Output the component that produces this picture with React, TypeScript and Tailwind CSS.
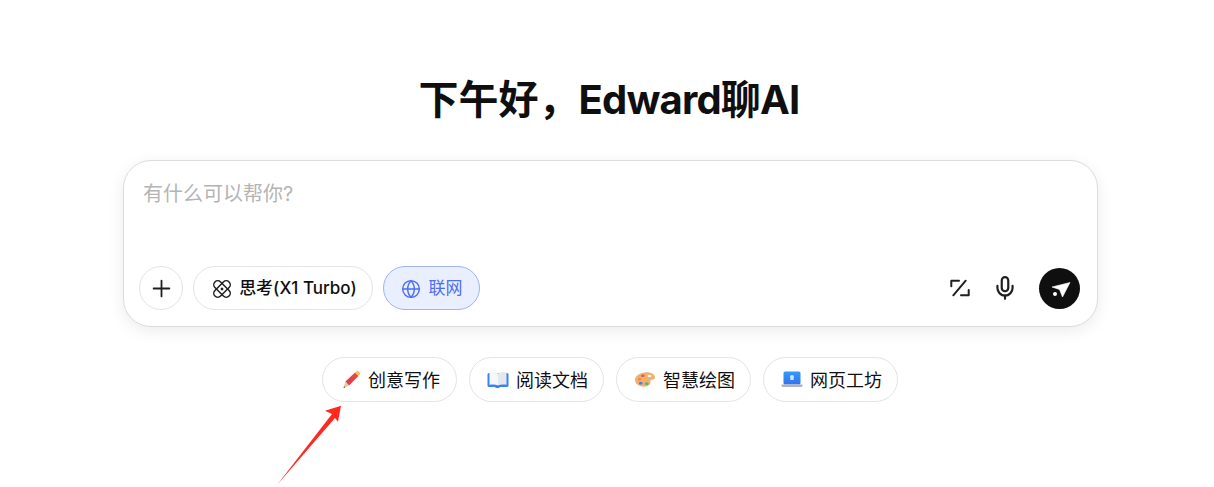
import React from 'react';
import { Mic, Plus, Globe } from 'lucide-react';

const FONT = "font-['Inter','Noto_Sans_CJK_SC',sans-serif]";

const ThinkIcon = () => (
  <svg width="20" height="20" viewBox="0 0 20 20" fill="none" stroke="#1f1f1f" strokeWidth="1.5">
    <rect x="0" y="6" width="20" height="8" rx="4" transform="rotate(45 10 10)" />
    <rect x="0" y="6" width="20" height="8" rx="4" transform="rotate(-45 10 10)" />
    <path d="M10 8.300 11.700 10 10 11.700 8.300 10Z" fill="#1f1f1f" stroke="none" />
  </svg>
);

const FormulaIcon = () => (
  <svg width="22" height="20" viewBox="0 0 22 20" fill="none" stroke="#1f1f1f" strokeWidth="2" strokeLinecap="round" strokeLinejoin="round">
    <path d="M10 2.700H2.300v5.600" />
    <path d="M19.700 12v5.300H12" />
    <path d="M16.700 2.700 4.300 17.300" />
  </svg>
);

const SendIcon = () => (
  <svg width="22" height="22" viewBox="0 0 22 22" fill="white">
    <path d="M21 5.500 3 10l7.500 2.500 3 7.500Z" strokeLinejoin="round" stroke="white" strokeWidth="0.600" />
    <circle cx="6" cy="17" r="2" />
  </svg>
);

const PencilIcon = () => (
  <svg width="20" height="20" viewBox="0 0 20 20">
    <defs>
      <linearGradient id="pencil-body" x1="0" y1="1" x2="1" y2="0">
        <stop offset="0" stopColor="#e0304f" />
        <stop offset="1" stopColor="#f0503a" />
      </linearGradient>
    </defs>
    <path d="M4.500 11.500 14 2.500l3.500 3.500-9.500 9.500Z" fill="url(#pencil-body)" />
    <path d="M14 2.500l1.500-1.300c.8-.6 1.500-.5 2.200.2l1 1c.7.7.8 1.500.1 2.200L17.500 6Z" fill="#f8c34a" />
    <path d="M4.500 11.500 8 15.500 2.500 18Z" fill="#e9c49c" />
    <path d="M3.200 16.300 4.400 17.400 2.500 18Z" fill="#4b4b4b" />
  </svg>
);

const BookIcon = () => (
  <svg width="22" height="20" viewBox="0 0 22 20">
    <path d="M0.500 4.500a1.500 1.500 0 0 1 1.500-1.500h18a1.500 1.500 0 0 1 1.500 1.500v11a1.500 1.500 0 0 1-1.500 1.500h-7l-1 1h-3l-1-1H2a1.500 1.500 0 0 1-1.500-1.500Z" fill="#3f82ef" />
    <path d="M2.500 2.500c3-.6 6.500-.4 8.500 1v12c-2-1-5.500-1.200-8.500-.8Z" fill="#f6f7f9" />
    <path d="M19.500 2.500c-3-.6-6.500-.4-8.500 1v12c2-1 5.500-1.200 8.500-.8Z" fill="#e4e7ec" />
  </svg>
);

const PaletteIcon = () => (
  <svg width="22" height="20" viewBox="0 0 22 20">
    <path d="M10.500 2.500c5.500-.8 10.500 1.500 10.500 5 0 2.300-3.200 1.900-4.300 2.800-1 .8.500 2.400-.8 4-1.600 2-5.200 3-8.800 2C3.100 15.300 1 12.800 1 10c0-3.800 4.200-6.800 9.500-7.500Z" fill="#eeb06f" />
    <rect x="7" y="4.500" width="3.500" height="2.500" rx="1" fill="#e9584f" />
    <rect x="4" y="8" width="3" height="2.500" rx="1" fill="#f08a3c" />
    <rect x="5" y="12" width="3.500" height="2.500" rx="1" fill="#3f82ef" />
    <rect x="11" y="12.500" width="3.500" height="2.500" rx="1" fill="#35c07a" />
    <ellipse cx="15.500" cy="6" rx="2" ry="1.100" fill="#fff" />
  </svg>
);

const LaptopIcon = () => (
  <svg width="22" height="20" viewBox="0 0 22 20">
    <defs>
      <linearGradient id="laptop-screen" x1="0" y1="0" x2="0" y2="1">
        <stop offset="0" stopColor="#2f9cf5" />
        <stop offset="1" stopColor="#3a6ff0" />
      </linearGradient>
    </defs>
    <rect x="2.500" y="1.500" width="17" height="13" rx="1.500" fill="url(#laptop-screen)" />
    <circle cx="11" cy="7" r="2" fill="#cfe3fb" />
    <rect x="9.500" y="8" width="3" height="2" fill="#cfe3fb" />
    <path d="M0.500 14.500h21v1c0 1-.7 1.500-1.500 1.500H2c-.8 0-1.500-.5-1.500-1.500Z" fill="#a9b4c4" />
  </svg>
);

const suggestions = [
  { icon: <PencilIcon />, label: '创意写作' },
  { icon: <BookIcon />, label: '阅读文档' },
  { icon: <PaletteIcon />, label: '智慧绘图' },
  { icon: <LaptopIcon />, label: '网页工坊' },
];

export default function App() {
  return (
    <div className={`relative h-[487px] w-[1214px] overflow-hidden bg-white text-[#0f0f0f] ${FONT}`}>
      <div className="flex flex-col items-center pt-[74px] pl-[7px]">
        {/* Greeting */}
        <h1 className="mr-[3px] h-[52px] text-[40px] leading-[52px] font-bold">
          下午好，<span className="tracking-[-0.8px]">Edward聊AI</span>
        </h1>

        {/* Input box */}
        <div className="mt-[34px] flex h-[167px] w-[975px] flex-col justify-between rounded-[28px] border border-[#dcdcdc] bg-white pt-[19px] pr-[14px] pb-[16px] pl-[15px] shadow-[0_4px_16px_rgba(0,0,0,0.08)]">
          <div className="pl-[4px] text-[20px] leading-[28px] text-[#b4b4b4]">有什么可以帮你?</div>
          <div className="flex items-center">
            <button className="flex h-[44px] w-[44px] items-center justify-center rounded-full border border-[#e4e4e4]">
              <Plus size={27} strokeWidth={1.6} color="#1f1f1f" />
            </button>
            <button className="ml-[10px] flex h-[44px] w-[180px] items-center justify-center gap-[7px] rounded-full border border-[#e4e4e4] pt-[1px] pl-[3px] text-[17px] font-medium">
              <ThinkIcon />
              思考(X1 Turbo)
            </button>
            <button className="ml-[10px] flex h-[44px] w-[97px] items-center justify-center gap-[8px] rounded-full border border-[#9db4f5] bg-[#e9effe] pt-[1px] text-[17px] text-[#4f6ef7]">
              <Globe size={20} strokeWidth={1.75} />
              联网
            </button>
            <div className="ml-auto flex items-center pr-[3px]">
              <FormulaIcon />
              <span className="ml-[21px] flex">
                <Mic size={26} strokeWidth={2} color="#1f1f1f" />
              </span>
              <button className="ml-[21px] flex h-[41px] w-[41px] items-center justify-center rounded-full bg-[#0f0f0f]">
                <SendIcon />
              </button>
            </div>
          </div>
        </div>

        {/* Suggestions */}
        <div className="mt-[30px] mr-[2px] flex gap-[12px]">
          {suggestions.map((s) => (
            <button
              key={s.label}
              className="flex h-[45px] w-[135px] items-center justify-center gap-[7px] rounded-full border border-[#e4e4e4] pt-[1px] pl-[3px] text-[18px]"
            >
              {s.icon}
              {s.label}
            </button>
          ))}
        </div>
      </div>

      {/* Annotation arrow */}
      <svg className="absolute top-[400px] left-[275px]" width="70" height="87" viewBox="0 0 70 87">
        <path d="M2 85 57 14 50 10.700 66 5.700 63 21.700 60 18Z" fill="#ff2a1f" />
      </svg>
    </div>
  );
}
